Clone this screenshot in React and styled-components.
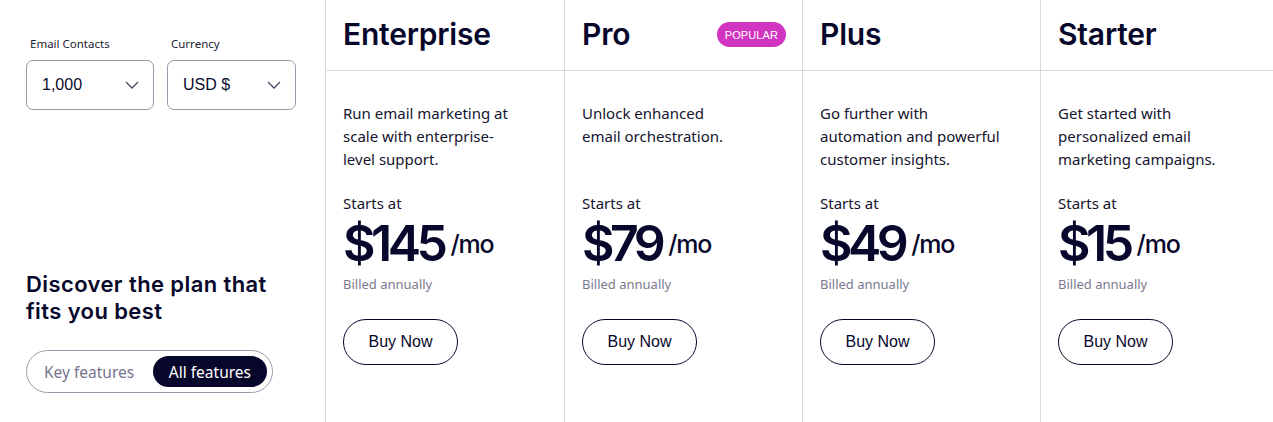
import React from 'react';
import styled, { createGlobalStyle } from 'styled-components';

const GlobalStyle = createGlobalStyle`
  * {
    box-sizing: border-box;
    margin: 0;
    padding: 0;
  }
  body {
    background: #ffffff;
    font-family: "Noto Sans", "Liberation Sans", sans-serif;
    color: #0b0b2c;
  }
`

const Page = styled.div`
  display: flex;
  height: 422px;
  width: 1273px;
  overflow: hidden;
`

const Sidebar = styled.aside`
  width: 326px;
  flex-shrink: 0;
  border-right: 1px solid #d9d8e0;
  padding: 36px 0 0 26px;
  display: flex;
  flex-direction: column;
`

const Filters = styled.div`
  display: flex;
  gap: 13px;
`

const Field = styled.div`
  display: flex;
  flex-direction: column;
`

const FieldLabel = styled.label`
  font-size: 11.5px;
  line-height: 16px;
  padding-left: 4px;
  margin-bottom: 8px;
  color: #1b1b33;
`

const Select = styled.div`
  width: ${p => p.w}px;
  height: 50px;
  border: 1px solid #9b99ab;
  border-radius: 7px;
  display: flex;
  align-items: center;
  justify-content: space-between;
  padding: 0 14px 0 15px;
  font-family: "Liberation Sans", sans-serif;
  font-size: 16px;
  color: #0b0b2c;
`

const Heading = styled.h2`
  margin-top: 161px;
  font-family: Inter, sans-serif;
  font-size: 22px;
  line-height: 27px;
  font-weight: 600;
  letter-spacing: 0.4px;
  color: #07072b;
`

const Toggle = styled.div`
  margin-top: 25px;
  width: 247px;
  height: 43px;
  border: 1px solid #9b99ab;
  border-radius: 22px;
  display: flex;
  align-items: center;
  justify-content: space-between;
  padding: 0 5px 0 17px;
`

const ToggleOption = styled.span`
  font-size: 15.5px;
  height: 31px;
  display: flex;
  align-items: center;
  border-radius: 16px;
  padding: ${p => (p.active ? '0 16px' : '0')};
  color: ${p => (p.active ? '#ffffff' : '#76748c')};
  background: ${p => (p.active ? '#07072b' : 'transparent')};
`

const Plans = styled.div`
  flex: 1;
  display: grid;
  grid-template-columns: 239px 238px 238px 1fr;
`

const Plan = styled.section`
  border-right: ${p => (p.last ? 'none' : '1px solid #d9d8e0')};
  display: flex;
  flex-direction: column;
`

const PlanHead = styled.header`
  height: 71px;
  border-bottom: 1px solid #d9d8e0;
  display: flex;
  align-items: center;
  justify-content: space-between;
  padding: 0 16px 0 17px;
`

const PlanName = styled.h3`
  font-family: Inter, sans-serif;
  font-size: 30px;
  font-weight: 600;
  letter-spacing: -0.2px;
  color: #07072b;
  margin-top: -3px;
`

const Badge = styled.span`
  background: #d034c1;
  color: #ffffff;
  font-family: "Liberation Sans", sans-serif;
  font-size: 11px;
  height: 25px;
  padding: 0 8px;
  border-radius: 13px;
  display: flex;
  align-items: center;
  letter-spacing: 0.1px;
  margin-top: -1px;
`

const PlanBody = styled.div`
  padding: 31px 17px 0 17px;
  display: flex;
  flex-direction: column;
  align-items: flex-start;
`

const Description = styled.p`
  font-size: 15px;
  line-height: 23px;
  height: 69px;
  color: #14142e;
`

const StartsAt = styled.p`
  margin-top: 21px;
  font-size: 15px;
  line-height: 23px;
  color: #14142e;
`

const PriceRow = styled.div`
  display: flex;
  align-items: flex-end;
  margin-top: 2px;
  height: 52px;
`

const Price = styled.span`
  font-family: Inter, sans-serif;
  font-size: 50px;
  line-height: 52px;
  font-weight: 600;
  letter-spacing: -4.5px;
  color: #07072b;
`

const Per = styled.span`
  font-family: Inter, sans-serif;
  font-size: 25px;
  line-height: 30px;
  font-weight: 500;
  letter-spacing: -1.2px;
  margin-left: 7px;
  margin-bottom: 10px;
  color: #07072b;
`

const Billed = styled.p`
  margin-top: 5px;
  font-size: 13px;
  line-height: 20px;
  color: #7b798f;
`

const BuyButton = styled.button`
  margin-top: 25px;
  width: 115px;
  height: 46px;
  border: 1px solid #07072b;
  border-radius: 23px;
  background: #ffffff;
  font-family: "Liberation Sans", sans-serif;
  font-size: 16px;
  color: #07072b;
  cursor: pointer;
`

const Chevron = () => (
  <svg width="14" height="8" viewBox="0 0 14 8" fill="none">
    <path d="M1 1l6 6 6-6" stroke="#4a4860" strokeWidth="1.3" />
  </svg>
)

const plans = [
  { name: 'Enterprise', lines: ['Run email marketing at', 'scale with enterprise-', 'level support.'], price: '$145' },
  { name: 'Pro', lines: ['Unlock enhanced', 'email orchestration.'], price: '$79', popular: true },
  { name: 'Plus', lines: ['Go further with', 'automation and powerful', 'customer insights.'], price: '$49' },
  { name: 'Starter', lines: ['Get started with', 'personalized email', 'marketing campaigns.'], price: '$15' },
]

export default function App() {
  return (
    <Page>
      <GlobalStyle />
      <Sidebar>
        <Filters>
          <Field>
            <FieldLabel>Email Contacts</FieldLabel>
            <Select w={128}>1,000<Chevron /></Select>
          </Field>
          <Field>
            <FieldLabel>Currency</FieldLabel>
            <Select w={129}>USD $<Chevron /></Select>
          </Field>
        </Filters>
        <Heading>Discover the plan that<br />fits you best</Heading>
        <Toggle>
          <ToggleOption>Key features</ToggleOption>
          <ToggleOption active>All features</ToggleOption>
        </Toggle>
      </Sidebar>
      <Plans>
        {plans.map((p, i) => (
          <Plan key={p.name} last={i === plans.length - 1}>
            <PlanHead>
              <PlanName>{p.name}</PlanName>
              {p.popular && <Badge>POPULAR</Badge>}
            </PlanHead>
            <PlanBody>
              <Description>
                {p.lines.map((l, j) => (
                  <React.Fragment key={j}>{l}{j < p.lines.length - 1 && <br />}</React.Fragment>
                ))}
              </Description>
              <StartsAt>Starts at</StartsAt>
              <PriceRow>
                <Price>{p.price}</Price>
                <Per>/mo</Per>
              </PriceRow>
              <Billed>Billed annually</Billed>
              <BuyButton>Buy Now</BuyButton>
            </PlanBody>
          </Plan>
        ))}
      </Plans>
    </Page>
  )
}
